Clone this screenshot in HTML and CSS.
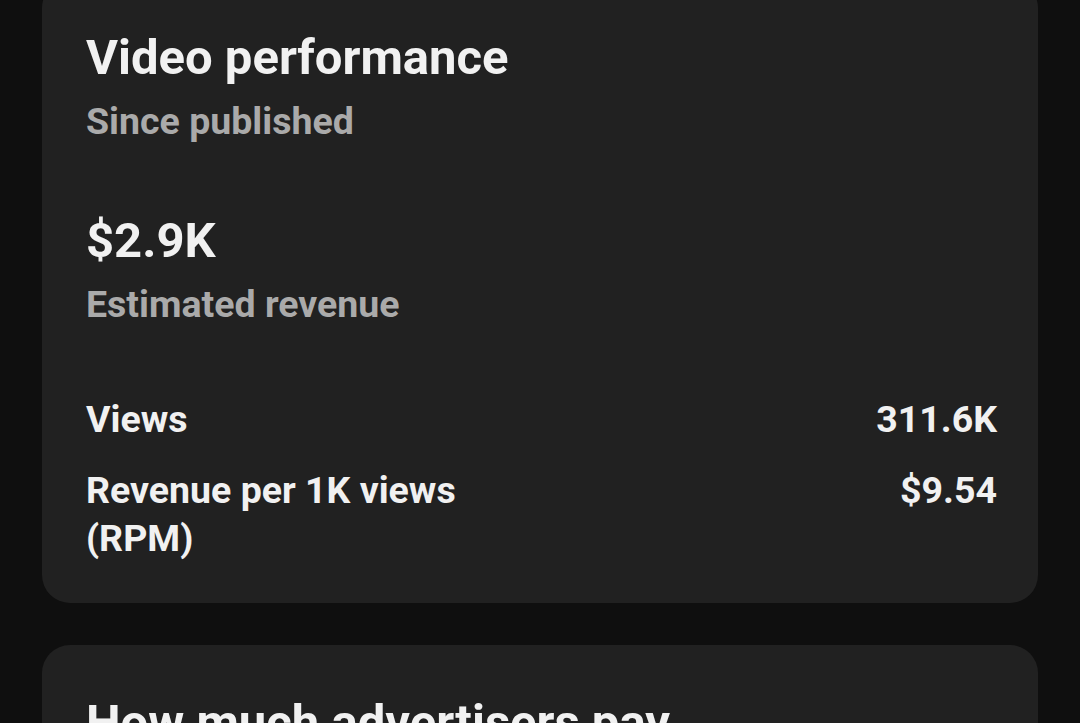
FILE: index.html
```html
<!DOCTYPE html>
<html lang="en">
<head>
  <meta charset="UTF-8" />
  <meta name="viewport" content="width=device-width, initial-scale=1.0"/>
  <title>Revenue</title>
  <link rel="stylesheet" href="styles.css">
</head>
<body>

  <div class="page">
    <section class="card">
      <h2 class="card-title">Video performance</h2>
      <div class="card-sub">Since published</div>

      <div class="amount">$2.9K</div>
      <div class="amount-label">Estimated revenue</div>

      <div class="stats">
        <div class="stat-row">
          <span class="stat-name">Views</span>
          <span class="stat-value">311.6K</span>
        </div>
        <div class="stat-row">
          <span class="stat-name">Revenue per 1K views (RPM)</span>
          <span class="stat-value">$9.54</span>
        </div>
      </div>
    </section>

    <section class="card">
      <h2 class="card-title">How much advertisers pay</h2>
      <div class="card-sub">Since published</div>
    </section>
  </div>

</body>
</html>
```

FILE: styles.css
```css
* {
  box-sizing: border-box;
}

body {
  font-family: Roboto, 'Noto Sans', sans-serif;
  background: #0f0f0f;
  color: #f1f1f1;
  margin: 0;
  padding: 0;
}

.page {
  margin-top: -20px;
  padding: 0 42px;
}

.card {
  background: #212121;
  border-radius: 28px;
  padding: 49px 41px 41px 44px;
  margin-bottom: 42px;
}

.card-title {
  font-size: 49px;
  line-height: 58px;
  font-weight: 700;
  margin: 0;
}

.card-sub {
  font-size: 37.5px;
  line-height: 44px;
  font-weight: 700;
  color: #aaaaaa;
  margin-top: 12px;
}

.amount {
  font-size: 49px;
  line-height: 56px;
  font-weight: 700;
  margin-top: 70px;
}

.amount-label {
  font-size: 37.5px;
  line-height: 44px;
  font-weight: 700;
  color: #aaaaaa;
  margin-top: 13px;
}

.stats {
  margin-top: 69px;
}

.stat-row {
  display: flex;
  justify-content: space-between;
  font-size: 37.5px;
  line-height: 48px;
  font-weight: 700;
}

.stat-row + .stat-row {
  margin-top: 23px;
}

.stat-name {
  width: 50%;
}

.stat-value {
  text-align: right;
}
```
